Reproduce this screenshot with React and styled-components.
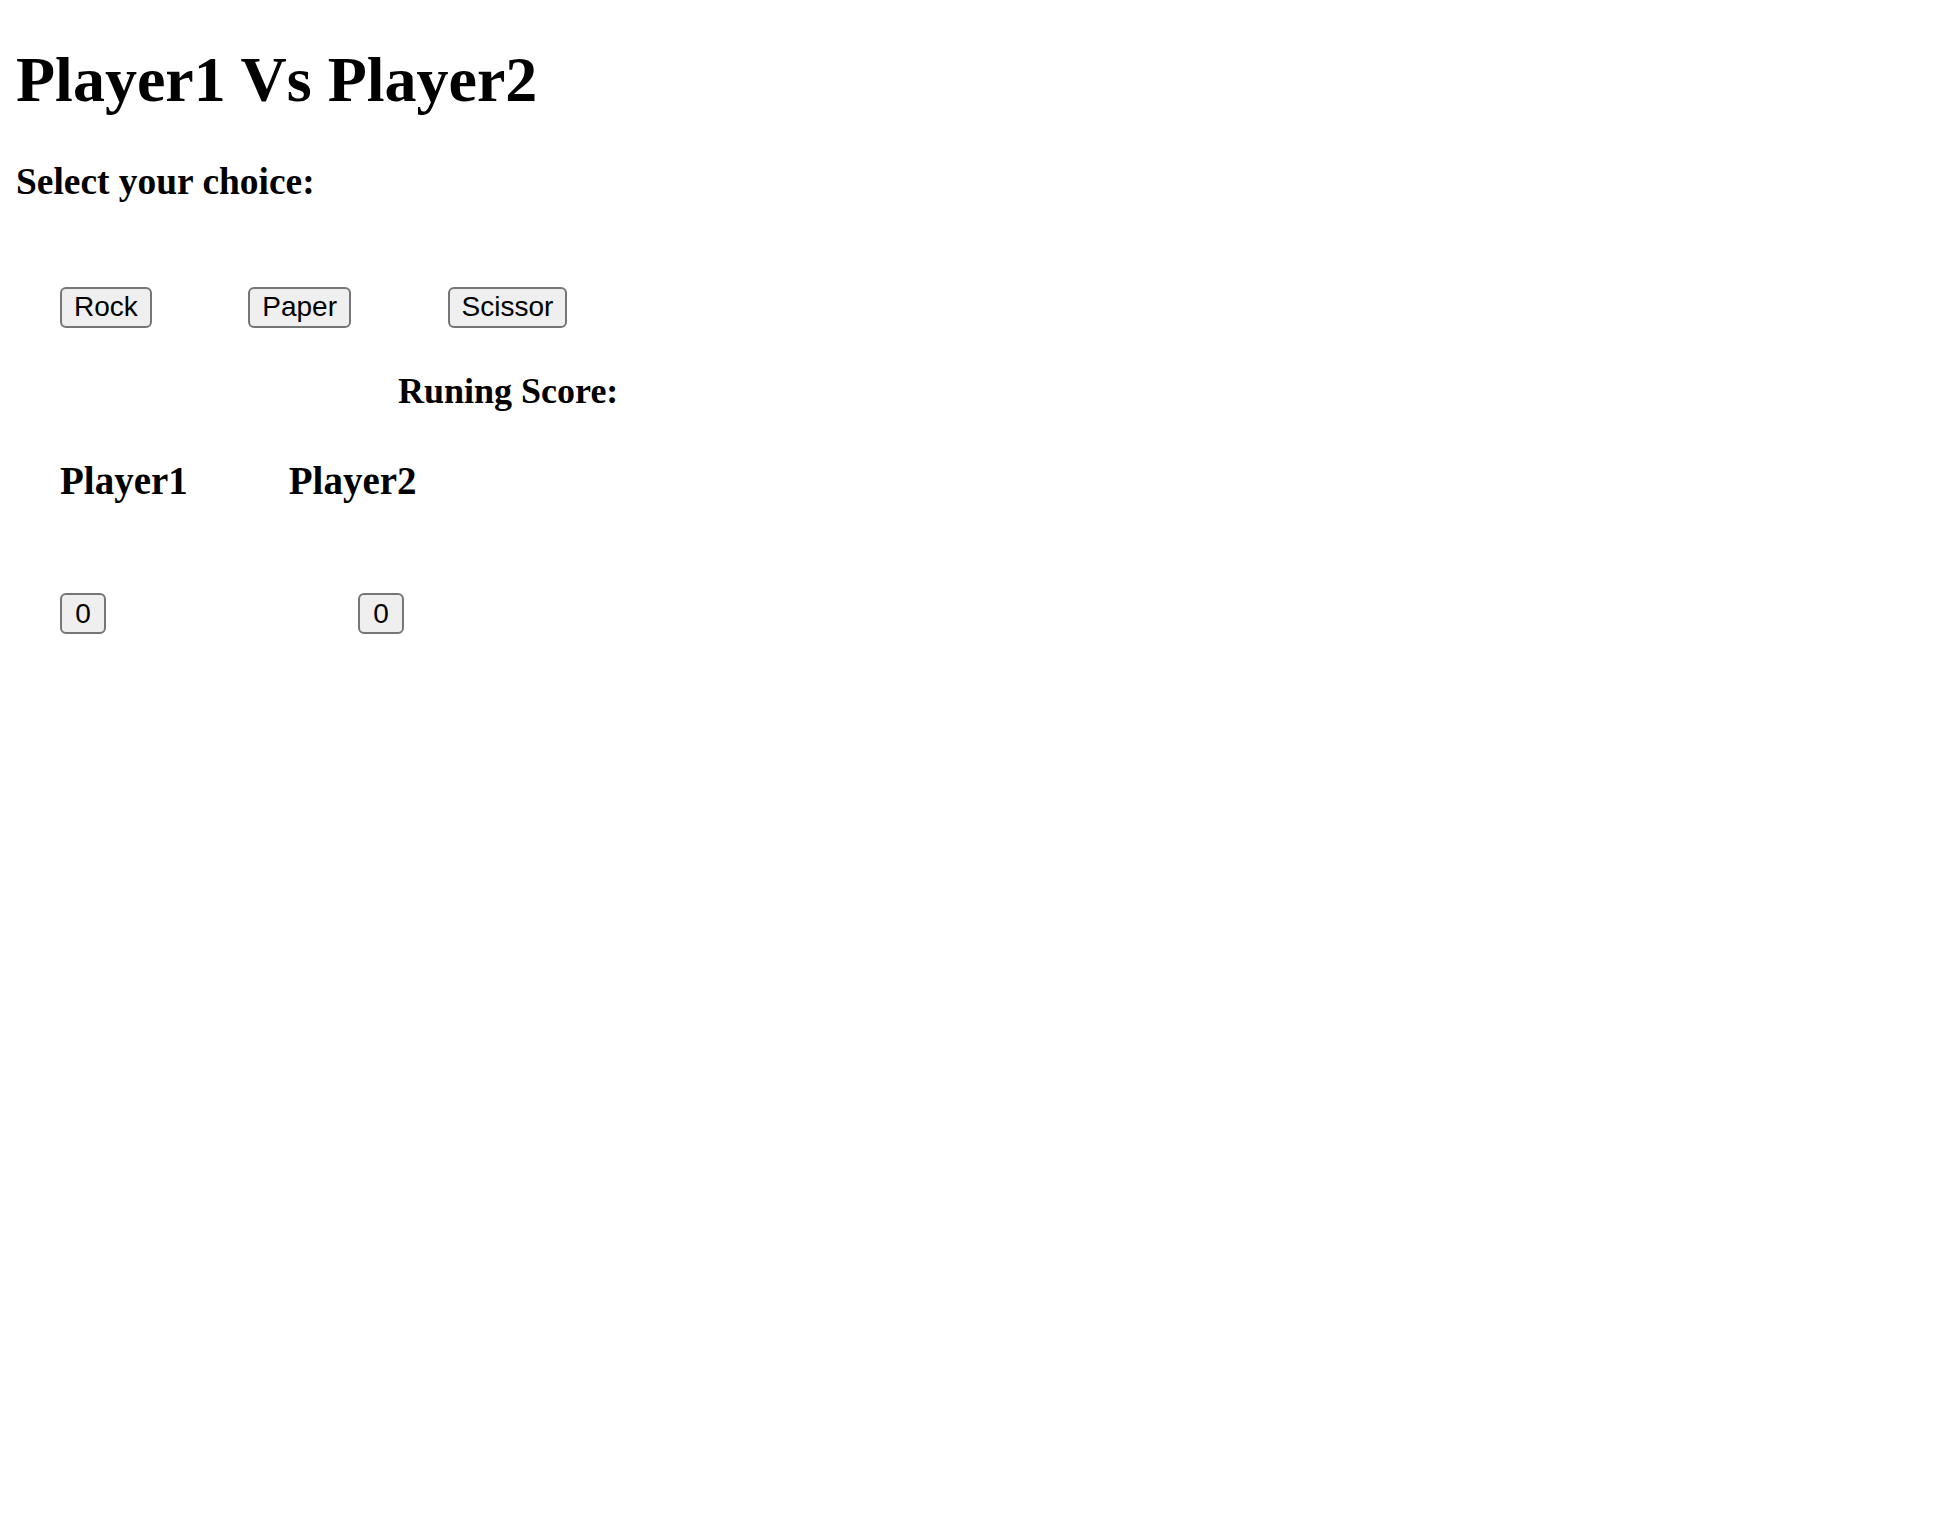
import React, { useState } from "react"
import styled, { createGlobalStyle } from "styled-components"

const GlobalStyle = createGlobalStyle`
  body {
    margin: 0 16px 16px;
    background: #fff;
    color: #000;
    font-family: "Liberation Serif", "Times New Roman", serif;
    font-size: 32px;
  }
`

const Title = styled.h1`
  font-size: 64px;
  font-weight: bold;
  margin: 42.88px 0;
`

const Subtitle = styled.h3`
  font-size: 37.44px;
  font-weight: bold;
  margin: 37.44px 0 0;
`

const ChoiceRow = styled.div`
  display: flex;
  align-items: flex-start;
  gap: 96.5px;
  margin: 84px 0 0 44px;
`

const Button = styled.button`
  font-family: "Liberation Sans", Arial, sans-serif;
  font-size: 28px;
  color: #000;
  background: #efefef;
  border: 2px solid #767676;
  border-radius: 6px;
  padding: 2.5px 12px;
  min-width: 46px;
  line-height: normal;
  cursor: pointer;
`

const ScoreTitle = styled.h3`
  font-size: 36px;
  font-weight: bold;
  margin: 42.5px 0 0 382px;
`

const PlayersRow = styled.div`
  display: flex;
  gap: ${(p) => p.gap}px;
  margin: ${(p) => p.top}px 0 0 44px;
`

const PlayerName = styled.h3`
  font-size: 39px;
  font-weight: bold;
  margin: 0;
`

const App = () => {
  const [score, setScore] = useState({ p1: 0, p2: 0 })

  const play = (choice) => {
    const options = ["Rock", "Paper", "Scissor"]
    const other = options[Math.floor(Math.random() * 3)]
    if (choice === other) return
    const wins =
      (choice === "Rock" && other === "Scissor") ||
      (choice === "Paper" && other === "Rock") ||
      (choice === "Scissor" && other === "Paper")
    setScore((s) => (wins ? { ...s, p1: s.p1 + 1 } : { ...s, p2: s.p2 + 1 }))
  }

  return (
    <>
      <GlobalStyle />
      <Title>Player1 Vs Player2</Title>
      <Subtitle>Select your choice:</Subtitle>
      <ChoiceRow>
        <Button onClick={() => play("Rock")}>Rock</Button>
        <Button onClick={() => play("Paper")}>Paper</Button>
        <Button onClick={() => play("Scissor")}>Scissor</Button>
      </ChoiceRow>
      <ScoreTitle>Runing Score:</ScoreTitle>
      <PlayersRow top={46} gap={101}>
        <PlayerName>Player1</PlayerName>
        <PlayerName>Player2</PlayerName>
      </PlayersRow>
      <PlayersRow top={90} gap={252}>
        <Button>{score.p1}</Button>
        <Button>{score.p2}</Button>
      </PlayersRow>
    </>
  )
}

export default App
